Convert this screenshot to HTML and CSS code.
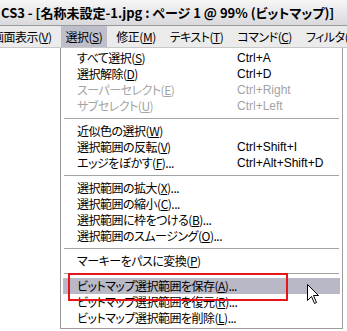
FILE: index.html
```html
<!DOCTYPE html>
<html lang="ja">
<head>
  <meta charset="UTF-8" />
  <meta name="viewport" content="width=device-width, initial-scale=1.0"/>
  <title>選択メニュー</title>
  <link rel="stylesheet" href="styles.css">
</head>
<body>
  <div class="titlebar">CS3 - [名称未設定-1.jpg : ページ 1 @ 99% (ビットマップ)]</div>

  <div class="menubar">
    <span class="menu-title">画面表示(<u>V</u>)</span>
    <span class="menu-title active">選択(<u>S</u>)</span>
    <span class="menu-title">修正(<u>M</u>)</span>
    <span class="menu-title">テキスト(<u>T</u>)</span>
    <span class="menu-title">コマンド(<u>C</u>)</span>
    <span class="menu-title">フィルタ(<u>I</u>)</span>
  </div>

  <div class="workspace">
    <div class="dropdown">
      <div class="item"><span>すべて選択(<u>S</u>)</span><span>Ctrl+A</span></div>
      <div class="item"><span>選択解除(<u>D</u>)</span><span>Ctrl+D</span></div>
      <div class="item disabled"><span>スーパーセレクト(<u>E</u>)</span><span>Ctrl+Right</span></div>
      <div class="item disabled"><span>サブセレクト(<u>U</u>)</span><span>Ctrl+Left</span></div>
      <div class="sep"></div>
      <div class="item"><span>近似色の選択(<u>W</u>)</span><span></span></div>
      <div class="item"><span>選択範囲の反転(<u>V</u>)</span><span>Ctrl+Shift+I</span></div>
      <div class="item"><span>エッジをぼかす(<u>F</u>)...</span><span>Ctrl+Alt+Shift+D</span></div>
      <div class="sep"></div>
      <div class="item"><span>選択範囲の拡大(<u>X</u>)...</span><span></span></div>
      <div class="item"><span>選択範囲の縮小(<u>C</u>)...</span><span></span></div>
      <div class="item"><span>選択範囲に枠をつける(<u>B</u>)...</span><span></span></div>
      <div class="item"><span>選択範囲のスムージング(<u>O</u>)...</span><span></span></div>
      <div class="sep"></div>
      <div class="item"><span>マーキーをパスに変換(<u>P</u>)</span><span></span></div>
      <div class="sep"></div>
      <div class="item hover"><span>ビットマップ選択範囲を保存(<u>A</u>)...</span><span></span></div>
      <div class="item"><span>ビットマップ選択範囲を復元(<u>R</u>)...</span><span></span></div>
      <div class="item"><span>ビットマップ選択範囲を削除(<u>L</u>)...</span><span></span></div>

      <div class="callout"></div>
      <svg class="cursor" width="13" height="21" viewBox="0 0 13 21">
        <path d="M0.5 0.5 L0.5 16.5 L4.5 12.5 L7.5 19.5 L9.5 18.5 L6.5 11.5 L11.5 11.5 Z" fill="#fff" stroke="#000" stroke-width="1"/>
      </svg>
    </div>
  </div>
</body>
</html>
```

FILE: styles.css
```css
* {
  box-sizing: border-box;
  margin: 0;
  padding: 0;
}

body {
  width: 347px;
  height: 331px;
  overflow: hidden;
  background: #fff;
  font-family: "Noto Sans CJK JP", "Liberation Sans", sans-serif;
  font-size: 12px;
  font-feature-settings: "palt" 1;
  color: #000;
}

u {
  text-decoration: underline;
  text-underline-offset: 1px;
}

.titlebar {
  height: 26px;
  padding-left: 1px;
  line-height: 25px;
  font-size: 13px;
  font-weight: bold;
  white-space: nowrap;
  overflow: hidden;
  background: linear-gradient(#f6f6f6, #d9d9dd);
  border-bottom: 1px solid #9a9a9a;
}

.menubar {
  height: 22px;
  display: flex;
  align-items: center;
  margin-left: -13px;
  white-space: nowrap;
  letter-spacing: -0.5px;
  background: #ebebeb;
  border-bottom: 1px solid #c8c8c8;
}

.menu-title {
  height: 21px;
  line-height: 21px;
  padding: 0 5px 0 5px;
  margin-right: 4px;
}

.menu-title.active {
  background: #bfbfcb;
}

.workspace {
  display: flex;
}

.dropdown {
  position: relative;
  margin-left: 60px;
  width: 283px;
  padding: 2px 2px 2px;
  letter-spacing: -0.5px;
  background: #fff;
  border: 1px solid #9c9c9c;
  border-top: none;
}

.item {
  display: grid;
  grid-template-columns: 160px 1fr;
  height: 16px;
  line-height: 16px;
  padding-left: 14px;
  white-space: nowrap;
}

.item span:last-child {
  font-family: "Liberation Sans", sans-serif;
  letter-spacing: 0;
}

.item.disabled {
  color: #a4a4a4;
}

.item.hover {
  background: #b8b8c6;
}

.sep {
  height: 9px;
  margin: 0 1px;
  border-bottom: 1px solid #a4a4a4;
  transform: translateY(-4px);
}

.callout {
  position: absolute;
  left: 7px;
  top: 225px;
  width: 220px;
  height: 28px;
  border: 2px solid #e8141c;
}

.cursor {
  position: absolute;
  left: 246px;
  top: 236px;
}
```
